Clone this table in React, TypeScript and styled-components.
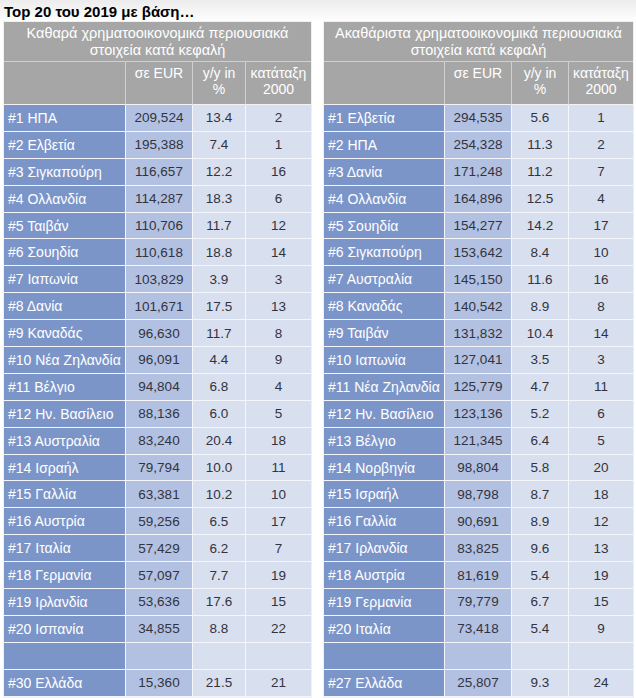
import React from "react";
import styled, { createGlobalStyle } from "styled-components";

const GlobalStyle = createGlobalStyle`
  html, body {
    margin: 0;
    padding: 0;
    background: #ffffff;
  }
  body {
    font-family: "Liberation Sans", Arial, sans-serif;
  }
`;

const Page = styled.div`
  width: 636px;
  height: 698px;
  overflow: hidden;
  background: linear-gradient(to bottom, #ececec 0px, #f6f6f6 12px, #ffffff 22px);
  display: flex;
  flex-direction: column;
`;

const Title = styled.h1`
  margin: 0;
  padding: 3px 0 0 4px;
  height: 19px;
  font-size: 15px;
  line-height: 17px;
  font-weight: bold;
  color: #000;
`;

const Tables = styled.div`
  display: flex;
  gap: 13px;
  padding-left: 4px;
`;

const Grid = styled.div<{ $cols: string }>`
  display: grid;
  grid-template-columns: ${({ $cols }) => $cols};
  grid-template-rows: 40px 43px;
  grid-auto-rows: 26.9px;
  outline: 1px solid #eef0f5;
`;

const TopHead = styled.div`
  grid-column: 1 / span 4;
  background: #a6a6a6;
  color: #fff;
  font-size: 14.5px;
  line-height: 17px;
  text-align: center;
  padding-top: 3px;
  box-sizing: border-box;
  white-space: pre-line;
  border-bottom: 1px solid #d0d0d0;
`;

const SubHead = styled.div<{ $last?: boolean }>`
  background: #a6a6a6;
  color: #fff;
  font-size: 14px;
  line-height: 16px;
  text-align: center;
  padding-top: 3px;
  box-sizing: border-box;
  border-right: ${({ $last }) => ($last ? "none" : "1px solid #d0d0d0")};
  border-bottom: 1px solid #f2f2f2;
  white-space: pre-line;
`;

const Cell = styled.div<{ $kind: "name" | "eur" | "plain"; $last?: boolean }>`
  box-sizing: border-box;
  display: flex;
  align-items: center;
  justify-content: ${({ $kind }) => ($kind === "name" ? "flex-start" : "center")};
  padding-left: ${({ $kind }) => ($kind === "name" ? "4px" : "0")};
  font-size: ${({ $kind }) => ($kind === "name" ? "14px" : "13.5px")};
  white-space: nowrap;
  color: ${({ $kind }) => ($kind === "name" ? "#ffffff" : "#333340")};
  background: ${({ $kind }) =>
    $kind === "name" ? "#7c95c9" : $kind === "eur" ? "#b2c1e1" : "#d8dfef"};
  border-right: ${({ $last }) => ($last ? "none" : "1px solid #f4f6fb")};
  border-bottom: 1px solid #f4f6fb;
`;

type Row = [string, string, string, string];

const netRows: Row[] = [
  ["#1 ΗΠΑ", "209,524", "13.4", "2"],
  ["#2 Ελβετία", "195,388", "7.4", "1"],
  ["#3 Σιγκαπούρη", "116,657", "12.2", "16"],
  ["#4 Ολλανδία", "114,287", "18.3", "6"],
  ["#5 Ταιβάν", "110,706", "11.7", "12"],
  ["#6 Σουηδία", "110,618", "18.8", "14"],
  ["#7 Ιαπωνία", "103,829", "3.9", "3"],
  ["#8 Δανία", "101,671", "17.5", "13"],
  ["#9 Καναδάς", "96,630", "11.7", "8"],
  ["#10 Νέα Ζηλανδία", "96,091", "4.4", "9"],
  ["#11 Βέλγιο", "94,804", "6.8", "4"],
  ["#12 Ην. Βασίλειο", "88,136", "6.0", "5"],
  ["#13 Αυστραλία", "83,240", "20.4", "18"],
  ["#14 Ισραήλ", "79,794", "10.0", "11"],
  ["#15 Γαλλία", "63,381", "10.2", "10"],
  ["#16 Αυστρία", "59,256", "6.5", "17"],
  ["#17 Ιταλία", "57,429", "6.2", "7"],
  ["#18 Γερμανία", "57,097", "7.7", "19"],
  ["#19 Ιρλανδία", "53,636", "17.6", "15"],
  ["#20 Ισπανία", "34,855", "8.8", "22"],
  ["", "", "", ""],
  ["#30 Ελλάδα", "15,360", "21.5", "21"],
];

const grossRows: Row[] = [
  ["#1 Ελβετία", "294,535", "5.6", "1"],
  ["#2 ΗΠΑ", "254,328", "11.3", "2"],
  ["#3 Δανία", "171,248", "11.2", "7"],
  ["#4 Ολλανδία", "164,896", "12.5", "4"],
  ["#5 Σουηδία", "154,277", "14.2", "17"],
  ["#6 Σιγκαπούρη", "153,642", "8.4", "10"],
  ["#7 Αυστραλία", "145,150", "11.6", "16"],
  ["#8 Καναδάς", "140,542", "8.9", "8"],
  ["#9 Ταιβάν", "131,832", "10.4", "14"],
  ["#10 Ιαπωνία", "127,041", "3.5", "3"],
  ["#11 Νέα Ζηλανδία", "125,779", "4.7", "11"],
  ["#12 Ην. Βασίλειο", "123,136", "5.2", "6"],
  ["#13 Βέλγιο", "121,345", "6.4", "5"],
  ["#14 Νορβηγία", "98,804", "5.8", "20"],
  ["#15 Ισραήλ", "98,798", "8.7", "18"],
  ["#16 Γαλλία", "90,691", "8.9", "12"],
  ["#17 Ιρλανδία", "83,825", "9.6", "13"],
  ["#18 Αυστρία", "81,619", "5.4", "19"],
  ["#19 Γερμανία", "79,779", "6.7", "15"],
  ["#20 Ιταλία", "73,418", "5.4", "9"],
  ["", "", "", ""],
  ["#27 Ελλάδα", "25,807", "9.3", "24"],
];

const RankTable: React.FC<{ title: string; cols: string; rows: Row[] }> = ({ title, cols, rows }) => (
  <Grid $cols={cols}>
    <TopHead>{title}</TopHead>
    <SubHead />
    <SubHead>σε EUR</SubHead>
    <SubHead>{"y/y in\n%"}</SubHead>
    <SubHead $last>{"κατάταξη\n2000"}</SubHead>
    {rows.map((r, i) => (
      <React.Fragment key={i}>
        <Cell $kind="name">{r[0]}</Cell>
        <Cell $kind="eur">{r[1]}</Cell>
        <Cell $kind="plain">{r[2]}</Cell>
        <Cell $kind="plain" $last>
          {r[3]}
        </Cell>
      </React.Fragment>
    ))}
  </Grid>
);

const App: React.FC = () => (
  <Page>
    <GlobalStyle />
    <Title>Top 20 του 2019 με βάση…</Title>
    <Tables>
      <RankTable
        title={"Καθαρά χρηματοοικονομικά περιουσιακά\nστοιχεία κατά κεφαλή"}
        cols="122px 67px 53px 65px"
        rows={netRows}
      />
      <RankTable
        title={"Ακαθάριστα χρηματοοικονομικά περιουσιακά\nστοιχεία κατά κεφαλή"}
        cols="121px 67px 57px 64px"
        rows={grossRows}
      />
    </Tables>
  </Page>
);

export default App;
